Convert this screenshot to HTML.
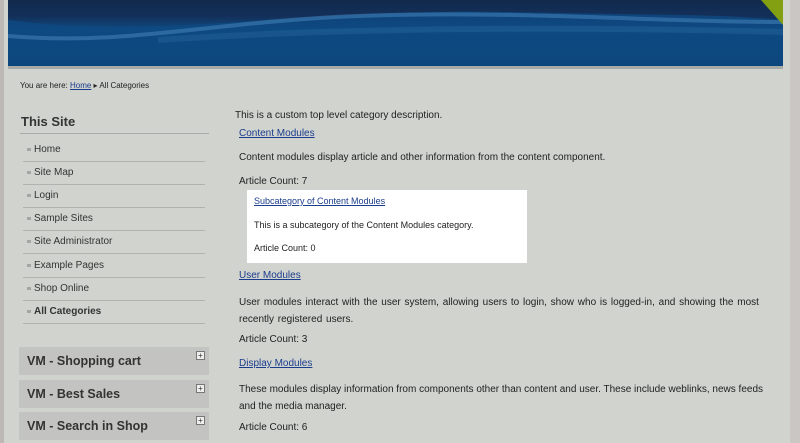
<!DOCTYPE html>
<html><head><style>
body{margin:0;width:800px;height:443px;overflow:hidden;background:#d1d3ce;font-family:"Liberation Sans",sans-serif;font-size:10px;color:#222;position:relative}
.edge{position:absolute;left:0;top:0;width:4px;height:443px;background:#bdb8b6}
.edge2{position:absolute;left:790px;top:0;width:10px;height:443px;background:#c9c6c4}
.banner{position:absolute;left:8px;top:0;width:775px;height:66px;background:linear-gradient(180deg,#12294c 0%,#13305a 25%,#0f4a80 45%,#0d4577 70%,#0c3b6b 100%);overflow:hidden}
.line{position:absolute;left:8px;top:66px;width:775px;height:3px;background:#a8aaa8}
.bc{position:absolute;left:20px;top:81px;font-size:8px}
a{color:#1a3c8c;text-decoration:underline}
.t{position:absolute}
h3{position:absolute;left:21px;top:114px;margin:0;font-size:13px;font-weight:bold;color:#333}
.hr{position:absolute;left:20px;top:133px;width:189px;height:1px;background:#aaa}
.mi{position:absolute;left:23px;width:182px;height:23px;border-bottom:1px solid #b2b3b0;font-size:10px;color:#333}
.mi span{position:absolute;left:11px;top:6px}
.mi:before{content:"";position:absolute;left:4px;top:10px;width:4px;height:3px;background:#a5a6a3}
.box{position:absolute;left:19px;width:190px;height:28px;background:#c3c4c1;font-size:12.5px;font-weight:bold;color:#333}
.box span{position:absolute;left:8px;top:7px}
.box i{position:absolute;right:4px;top:4px;width:7px;height:7px;border:1px solid #777;background:#eee;font-style:normal;font-weight:normal;font-size:8px;line-height:7px;text-align:center}
.wb{position:absolute;left:247px;top:190px;width:280px;height:73px;background:#fff}
</style></head><body>
<div class="edge"></div><div class="edge2"></div>
<div class="banner">
<svg width="775" height="66" style="position:absolute;left:0;top:0">
<path d="M0 20 C150 40 300 8 500 12 S700 14 775 20 L775 66 L0 66Z" fill="#0e4a82" opacity=".8"/>
<path d="M0 36 C120 46 200 22 350 16 S650 22 775 22" stroke="#3f7fb5" stroke-width="4" fill="none" opacity=".6"/>
<path d="M150 40 C300 30 500 25 775 32" stroke="#2a6aa0" stroke-width="6" fill="none" opacity=".4"/>
<polygon points="753,0 775,0 775,25" fill="#82a012"/>
</svg></div>
<div class="line"></div>
<div class="bc">You are here: <a>Home</a> ▸ All Categories</div>
<h3>This Site</h3><div class="hr"></div>
<div class="mi" style="top:138px"><span>Home</span></div>
<div class="mi" style="top:161px"><span>Site Map</span></div>
<div class="mi" style="top:184px"><span>Login</span></div>
<div class="mi" style="top:207px"><span>Sample Sites</span></div>
<div class="mi" style="top:230px"><span>Site Administrator</span></div>
<div class="mi" style="top:254px"><span>Example Pages</span></div>
<div class="mi" style="top:277px"><span>Shop Online</span></div>
<div class="mi" style="top:300px"><span><b>All Categories</b></span></div>
<div class="box" style="top:347px"><span>VM - Shopping cart</span><i>+</i></div>
<div class="box" style="top:380px"><span>VM - Best Sales</span><i>+</i></div>
<div class="box" style="top:412px"><span>VM - Search in Shop</span><i>+</i></div>
<div class="wb"></div>
<div class="t" style="left:235px;top:110px">This is a custom top level category description.</div>
<div class="t" style="left:239px;top:128px"><a>Content Modules</a></div>
<div class="t" style="left:239px;top:152px">Content modules display article and other information from the content component.</div>
<div class="t" style="left:239px;top:176px">Article Count: 7</div>
<div class="t" style="left:254px;top:196px;font-size:9px"><a>Subcategory of Content Modules</a></div>
<div class="t" style="left:254px;top:220px;font-size:9px">This is a subcategory of the Content Modules category.</div>
<div class="t" style="left:254px;top:243px;font-size:9px">Article Count: 0</div>
<div class="t" style="left:239px;top:270px"><a>User Modules</a></div>
<div class="t" style="left:239px;top:294px;width:530px;line-height:17px;word-spacing:1px">User modules interact with the user system, allowing users to login, show who is logged-in, and showing the most recently registered users.</div>
<div class="t" style="left:239px;top:334px">Article Count: 3</div>
<div class="t" style="left:239px;top:358px"><a>Display Modules</a></div>
<div class="t" style="left:239px;top:381px;width:540px;line-height:17px">These modules display information from components other than content and user. These include weblinks, news feeds and the media manager.</div>
<div class="t" style="left:239px;top:422px">Article Count: 6</div>
</body></html>
